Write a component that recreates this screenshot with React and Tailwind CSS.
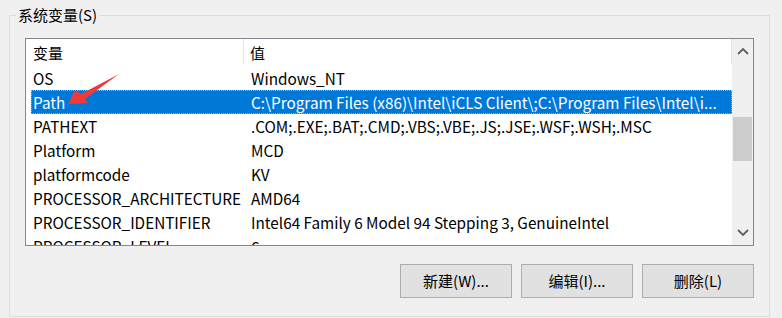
import React from "react";

const rows = [
  ["OS", "Windows_NT"],
  ["Path", "C:\\Program Files (x86)\\Intel\\iCLS Client\\;C:\\Program Files\\Intel\\i..."],
  ["PATHEXT", ".COM;.EXE;.BAT;.CMD;.VBS;.VBE;.JS;.JSE;.WSF;.WSH;.MSC"],
  ["Platform", "MCD"],
  ["platformcode", "KV"],
  ["PROCESSOR_ARCHITECTURE", "AMD64"],
  ["PROCESSOR_IDENTIFIER", "Intel64 Family 6 Model 94 Stepping 3, GenuineIntel"],
  ["PROCESSOR_LEVEL", "6"],
];

function Chevron({ up }) {
  return (
    <svg width="12" height="8" viewBox="0 0 12 8">
      <path
        d={up ? "M1 7 L6 2 L11 7" : "M1 1 L6 6 L11 1"}
        fill="none"
        stroke="#606060"
        strokeWidth="1.8"
      />
    </svg>
  );
}

export default function App() {
  const font = {
    fontFamily: '"Noto Sans CJK SC", "Noto Sans", sans-serif',
  };
  return (
    <div
      className="relative w-[782px] h-[318px] bg-[#f0f0f0] pt-[15px] pl-[9px] overflow-hidden text-[15.3px] text-black"
      style={font}
    >
      <div className="relative w-[761px] h-[302px] border border-[#dcdcdc]">
        <div className="absolute left-[6px] top-[-12px] px-[2px] bg-[#f0f0f0] leading-[22px] text-[15px]">
          系统变量(S)
        </div>

        <div className="ml-[15px] mt-[22px] w-[729px] h-[208px] border border-[#828790] bg-white flex">
          <div className="w-[706px] h-full overflow-hidden pl-[5px]">
            <div className="flex h-[27px] items-center text-[15px]">
              <div className="w-[212px] pl-[2px] pt-[1px] shrink-0">变量</div>
              <div className="w-px h-[25px] bg-[#e5e5e5] shrink-0 self-start"></div>
              <div className="flex-1 pl-[6px] pt-[1px]">值</div>
              <div className="w-px h-[25px] bg-[#e5e5e5] shrink-0 self-start"></div>
            </div>
            {rows.map(([k, v], i) => {
              const sel = k === "Path";
              return (
                <div
                  key={i}
                  className={
                    "flex h-[24px] items-center whitespace-nowrap " +
                    (sel
                      ? "bg-[#0078d7] text-white border border-dotted border-[#f0a040]"
                      : "border border-transparent")
                  }
                >
                  <div className="w-[212px] pl-[1px] shrink-0">{k}</div>
                  <div className="pl-[7px]">{v}</div>
                </div>
              );
            })}
          </div>
          <div className="w-[21px] h-full bg-[#f0f0f0] flex flex-col">
            <div className="h-[24px] flex items-center justify-center">
              <Chevron up />
            </div>
            <div className="h-[54px]"></div>
            <div className="h-[44px] mx-px bg-[#cdcdcd]"></div>
            <div className="flex-1"></div>
            <div className="h-[24px] flex items-center justify-center">
              <Chevron />
            </div>
          </div>
        </div>

        <div className="flex justify-end gap-[9px] w-[744px] mt-[18px] text-[15px]">
          {["新建(W)...", "编辑(I)...", "删除(L)"].map((t) => (
            <div
              key={t}
              className="w-[112px] h-[34px] bg-[#e1e1e1] border border-[#adadad] flex items-center justify-center"
            >
              {t}
            </div>
          ))}
        </div>
      </div>

      <svg
        className="absolute left-0 top-0 pointer-events-none"
        width="782"
        height="318"
      >
        <polygon
          points="68,104 75,90 81,94 119,74 85,99 88,103"
          fill="#f03a3a"
        />
      </svg>
    </div>
  );
}
